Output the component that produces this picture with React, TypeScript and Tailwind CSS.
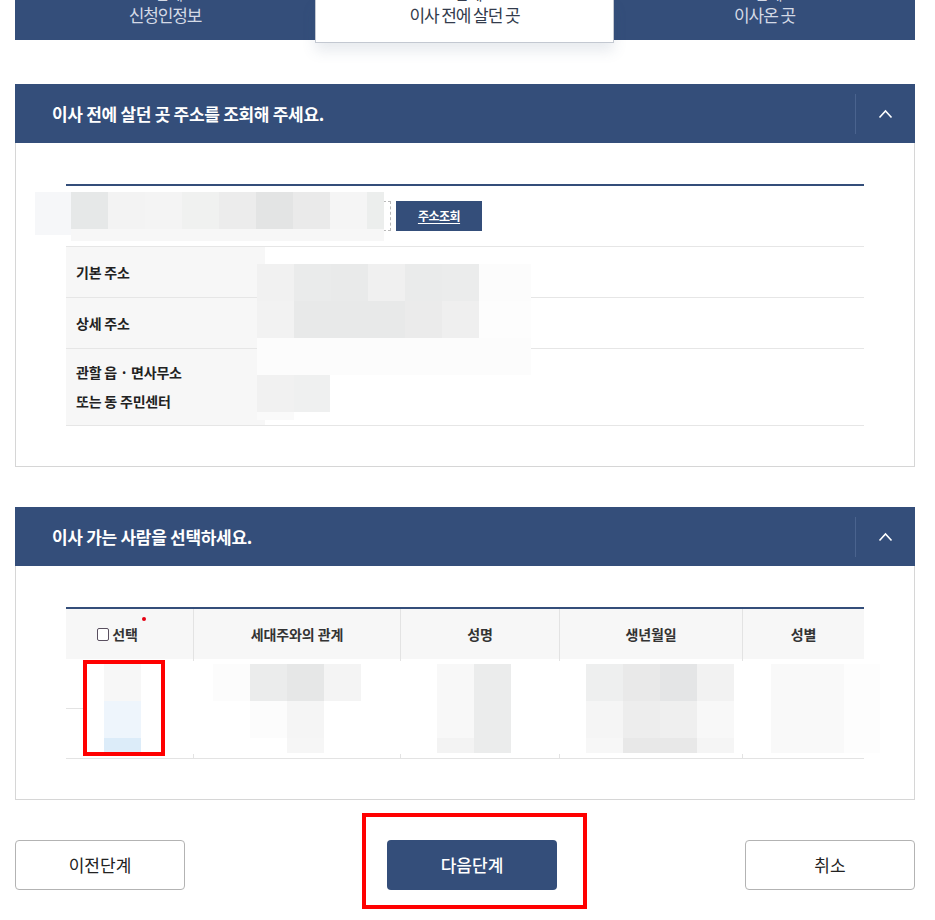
import React from "react";

type Block = [number, number, number, number, string];

function Mosaic({ blocks, ox, oy }: { blocks: Block[]; ox: number; oy: number }) {
  return (
    <>
      {blocks.map(([x1, y1, x2, y2, c], i) => (
        <div
          key={i}
          className="pointer-events-none absolute"
          style={{ left: x1 - ox, top: y1 - oy, width: x2 - x1, height: y2 - y1, background: c }}
        />
      ))}
    </>
  );
}

const searchBlocks: Block[] = [
  [35, 190, 71, 233, "#f6f7f9"],
  [71, 190, 108, 227, "#e6e8e8"],
  [108, 190, 145, 227, "#f3f3f3"],
  [145, 190, 182, 227, "#f4f4f4"],
  [182, 190, 219, 227, "#f0f1f0"],
  [219, 190, 256, 227, "#ececec"],
  [256, 190, 293, 227, "#e3e4e4"],
  [293, 190, 330, 227, "#eaeaea"],
  [330, 190, 367, 227, "#f5f5f5"],
  [367, 190, 384, 227, "#eceeed"],
  [71, 227, 384, 239, "#f7f7f7"],
  [257, 262, 294, 299, "#f1f1f1"],
  [294, 262, 331, 299, "#eaebeb"],
  [331, 262, 368, 299, "#e9eaea"],
  [368, 262, 405, 299, "#f0f0f0"],
  [405, 262, 442, 299, "#eaebeb"],
  [442, 262, 479, 299, "#ebecec"],
  [479, 262, 531, 299, "#fcfcfc"],
  [257, 299, 294, 336, "#f2f2f2"],
  [294, 299, 405, 336, "#e8e9e9"],
  [405, 299, 442, 336, "#ebebeb"],
  [442, 299, 479, 336, "#efefef"],
  [479, 299, 531, 336, "#fdfdfd"],
  [257, 336, 531, 373, "#fcfcfc"],
  [257, 373, 294, 410, "#f1f1f1"],
  [294, 373, 330, 410, "#eff0f0"],
  [257, 410, 294, 418, "#fafafa"],
];

const tableBlocks: Block[] = [
  [83, 659, 880, 752, "#ffffff"],
  [104, 662, 141, 699, "#f7f7f7"],
  [104, 699, 141, 736, "#eef5fc"],
  [104, 736, 141, 751, "#dcecf9"],
  [213, 662, 250, 699, "#fcfcfc"],
  [250, 662, 287, 699, "#ebecec"],
  [287, 662, 324, 699, "#e6e7e7"],
  [324, 662, 361, 699, "#f4f4f4"],
  [250, 699, 287, 736, "#fcfcfc"],
  [287, 699, 324, 736, "#f5f5f5"],
  [287, 736, 324, 751, "#f6f6f6"],
  [437, 662, 474, 736, "#f8f8f8"],
  [437, 736, 474, 751, "#f3f3f3"],
  [474, 662, 511, 751, "#ebecec"],
  [586, 662, 623, 699, "#eeefef"],
  [623, 662, 660, 699, "#e9e9e9"],
  [660, 662, 697, 699, "#e4e5e6"],
  [697, 662, 734, 699, "#f2f2f2"],
  [586, 699, 623, 736, "#f5f5f5"],
  [623, 699, 660, 736, "#ededed"],
  [660, 699, 697, 736, "#efefef"],
  [697, 699, 734, 736, "#f8f8f8"],
  [586, 736, 623, 751, "#f7f7f7"],
  [623, 736, 697, 751, "#e8e8e8"],
  [697, 736, 734, 751, "#f5f5f5"],
  [771, 662, 844, 751, "#f9f9f9"],
  [844, 662, 880, 751, "#fdfdfd"],
];

function Chevron() {
  return (
    <svg width="15" height="10" viewBox="0 0 15 10" fill="none">
      <polyline points="1.5,8.5 7.5,2 13.5,8.5" stroke="#ffffff" strokeWidth="1.6" />
    </svg>
  );
}

function SectionHeader({ title }: { title: string }) {
  return (
    <div className="flex h-[59px] items-center bg-[#344e7a]">
      <h2 className="flex-1 pl-[37px] text-[17px] font-bold leading-none tracking-[-0.3px] text-white">{title}</h2>
      <div className="h-[40px] w-px bg-[#4a638e]" />
      <div className="flex w-[59px] justify-center">
        <Chevron />
      </div>
    </div>
  );
}

function Tab({ step, label, cls }: { step: string; label: string; cls: string }) {
  return (
    <div className={`flex flex-col items-center overflow-hidden ${cls}`}>
      <span className="relative top-[1px] -mt-[17px] text-[15px] leading-[20px] text-[#d4dae6]">{step}</span>
      <span className="text-[17px] leading-[24px] tracking-[-1.1px] text-[#d4dae6]">{label}</span>
    </div>
  );
}

function InfoRow({ label, h }: { label: React.ReactNode; h: string }) {
  return (
    <div className={`flex border-b border-[#e6e6e6] ${h}`}>
      <div className="flex w-[199px] items-center bg-[#f7f7f7] pl-[10px] text-[14px] font-bold tracking-[-0.2px] text-[#222]">
        {label}
      </div>
      <div className="flex-1" />
    </div>
  );
}

const cols = ["w-[128px]", "w-[207px]", "w-[159px]", "w-[183px]", "w-[121px]"];

export default function App() {
  return (
    <div className="min-h-[920px] w-[935px] bg-white font-['Noto_Sans_CJK_KR','Noto_Sans',sans-serif] text-[#222]">
      <div className="ml-[15px] w-[900px]">
        {/* step tabs */}
        <div className="flex h-[40px] bg-[#344e7a]">
          <Tab step="1단계" label="신청인정보" cls="w-[300px]" />
          <div className="relative z-10 flex h-[43px] w-[299px] flex-col items-center overflow-hidden border border-t-0 border-[#c3c8d1] bg-white shadow-[0_8px_14px_rgba(70,90,120,0.13)]">
            <span className="relative top-[1px] -mt-[17px] text-[15px] leading-[20px] text-[#333b4c]">2단계</span>
            <span className="text-[17px] leading-[24px] tracking-[-1.1px] text-[#333b4c]">이사 전에 살던 곳</span>
          </div>
          <Tab step="3단계" label="이사온 곳" cls="flex-1" />
        </div>

        {/* section 1 */}
        <section className="mt-[44px]">
          <SectionHeader title="이사 전에 살던 곳 주소를 조회해 주세요." />
          <div className="border border-t-0 border-[#d6d6d6] px-[50px] pb-[40px] pt-[41px]">
            <div className="relative border-t-2 border-[#344e7a]">
              <div className="flex h-[61px] items-center border-b border-[#e6e6e6] pl-[5px]">
                <div className="h-[30px] w-[320px] border border-dashed border-[#b9b9b9] bg-white" />
                <button className="ml-[5px] flex h-[30px] w-[86px] items-center justify-center bg-[#344e7a] text-[12px] font-bold tracking-[-0.5px] text-white underline underline-offset-2">
                  주소조회
                </button>
              </div>
              <InfoRow label="기본 주소" h="h-[51px]" />
              <InfoRow label="상세 주소" h="h-[51px]" />
              <InfoRow
                label={
                  <div className="flex flex-col leading-[29px]">
                    <span>관할 읍 · 면사무소</span>
                    <span>또는 동 주민센터</span>
                  </div>
                }
                h="h-[77px]"
              />
              <Mosaic blocks={searchBlocks} ox={66} oy={184} />
            </div>
          </div>
        </section>

        {/* section 2 */}
        <section className="mt-[40px]">
          <SectionHeader title="이사 가는 사람을 선택하세요." />
          <div className="border border-t-0 border-[#d6d6d6] px-[50px] pb-[40px] pt-[41px]">
            <div className="relative border-t-2 border-[#344e7a]">
              <div className="flex h-[50px] bg-[#f7f7f7] text-[14px] font-bold tracking-[-0.1px] text-[#333]">
                <div className={`${cols[0]} flex items-center justify-center border-r border-[#e3e3e3] pr-[24px]`}>
                  <span className="relative flex items-center">
                    <span className="mr-[3px] h-[13px] w-[12px] rounded-[2px] border border-[#5a5060] bg-white" />
                    선택
                    <span className="absolute -right-[8px] -top-[7px] h-[4px] w-[4px] rounded-full bg-[#e60012]" />
                  </span>
                </div>
                <div className={`${cols[1]} flex items-center justify-center border-r border-[#e3e3e3]`}>세대주와의 관계</div>
                <div className={`${cols[2]} flex items-center justify-center border-r border-[#e3e3e3]`}>성명</div>
                <div className={`${cols[3]} flex items-center justify-center border-r border-[#e3e3e3]`}>생년월일</div>
                <div className={`${cols[4]} flex items-center justify-center`}>성별</div>
              </div>
              {[0, 1].map((r) => (
                <div key={r} className="flex h-[50px] border-b border-[#e3e3e3]">
                  {cols.map((c, i) => (
                    <div key={i} className={`${c} ${i < 4 ? "border-r border-[#e3e3e3]" : ""}`} />
                  ))}
                </div>
              ))}
              <Mosaic blocks={tableBlocks} ox={66} oy={607} />
              <div className="pointer-events-none absolute left-[17px] top-[51px] h-[96px] w-[82px] border-[4px] border-[#ff0000]" />
            </div>
          </div>
        </section>

        {/* buttons */}
        <div className="mt-[40px] flex">
          <button className="h-[50px] w-[170px] rounded-[4px] border border-[#b3b3b3] bg-white text-[17px] text-[#222]">
            이전단계
          </button>
          <div className="relative ml-[202px]">
            <button className="h-[50px] w-[170px] rounded-[4px] bg-[#344e7a] text-[17px] font-medium text-white">
              다음단계
            </button>
            <div className="pointer-events-none absolute -left-[25px] -top-[27px] h-[96px] w-[225px] border-[4px] border-[#ff0000]" />
          </div>
          <button className="ml-[188px] h-[50px] w-[170px] rounded-[4px] border border-[#b3b3b3] bg-white text-[17px] text-[#222]">
            취소
          </button>
        </div>
      </div>
    </div>
  );
}
